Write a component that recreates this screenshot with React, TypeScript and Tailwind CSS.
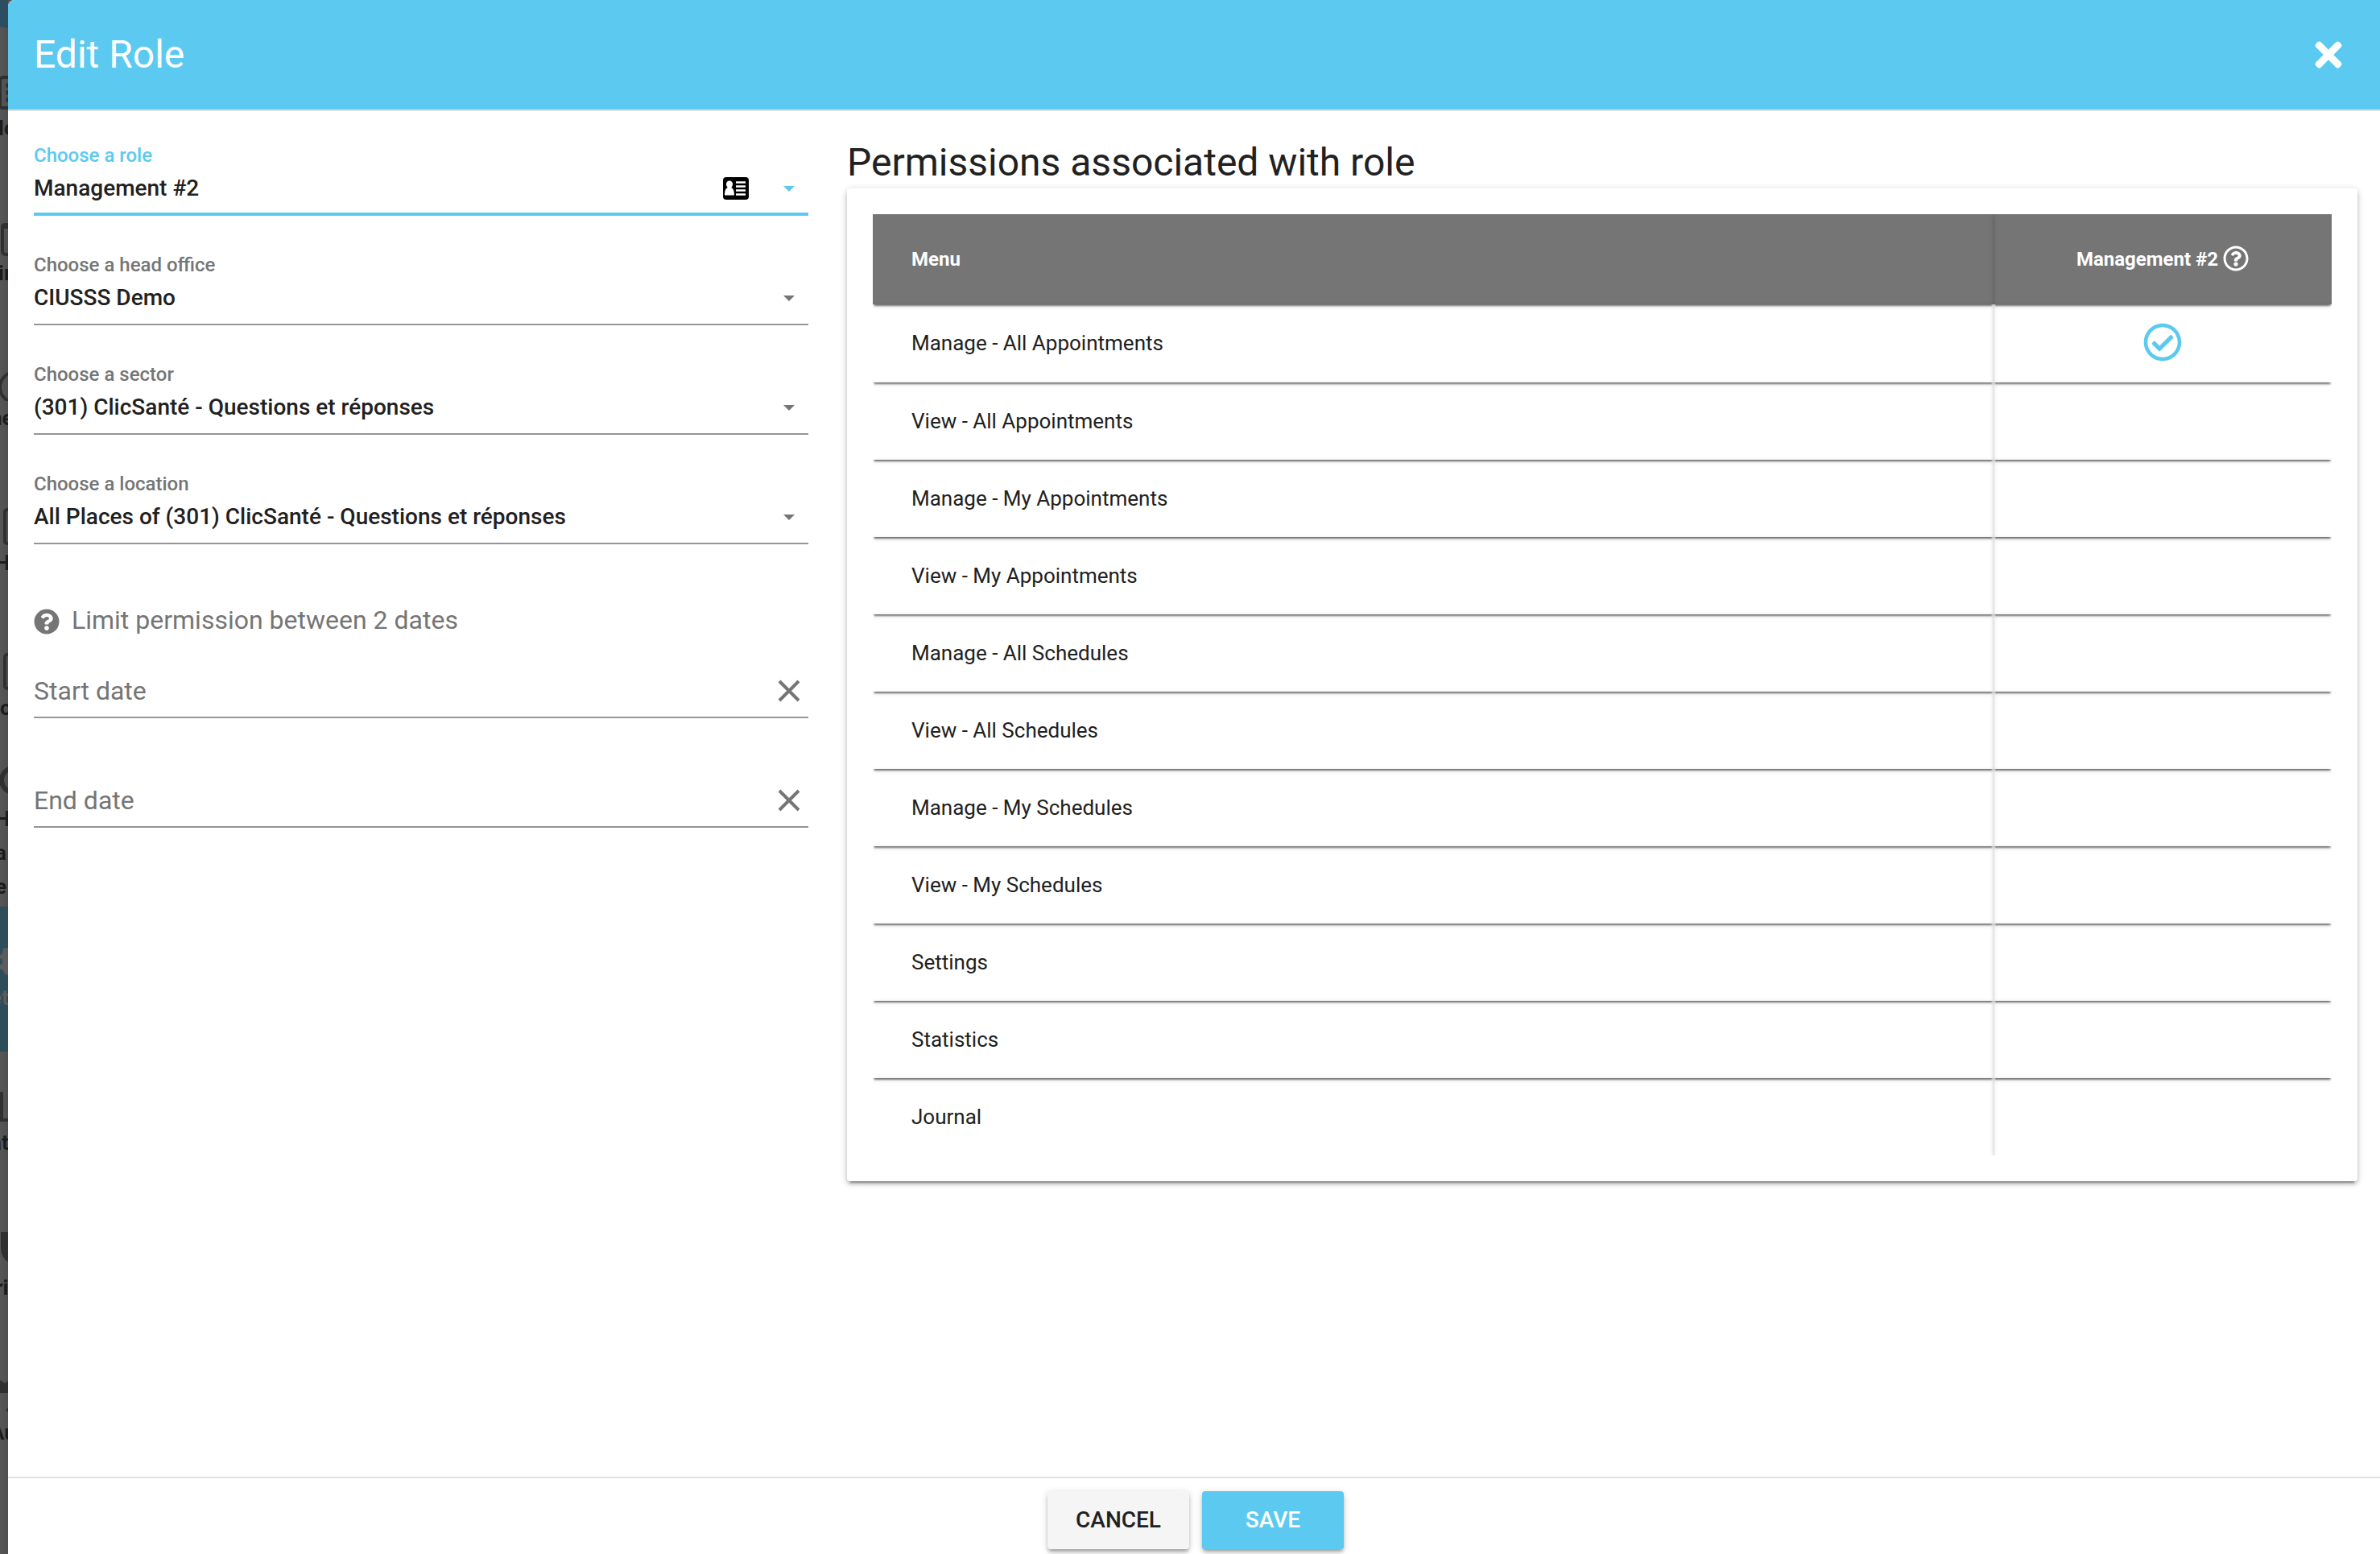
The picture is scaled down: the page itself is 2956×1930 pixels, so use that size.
import { useId, useState } from "react";
import type { ReactNode } from "react";
import { FaQuestionCircle, FaRegCheckCircle, FaRegQuestionCircle, FaTimes } from "react-icons/fa";

const permissions = [
    { label: "Manage - All Appointments", granted: true },
    { label: "View - All Appointments", granted: false },
    { label: "Manage - My Appointments", granted: false },
    { label: "View - My Appointments", granted: false },
    { label: "Manage - All Schedules", granted: false },
    { label: "View - All Schedules", granted: false },
    { label: "Manage - My Schedules", granted: false },
    { label: "View - My Schedules", granted: false },
    { label: "Settings", granted: false },
    { label: "Statistics", granted: false },
    { label: "Journal", granted: false },
];

const cellShadow = "shadow-[0_2px_6px_0_rgba(0,0,0,0.14),0_1px_2px_0_rgba(0,0,0,0.12),0_4px_2px_-2px_rgba(0,0,0,0.45)]";
const buttonShadow = "shadow-[0_2px_10px_0_rgba(0,0,0,0.16),0_4px_4px_-1px_rgba(0,0,0,0.3)]";

function NavItem({ icon, text, className = "" }: { icon: ReactNode; text: string; className?: string }) {
    return (
        <li className={`h-[180px] overflow-hidden pt-11 ${className}`}>
            <svg className="block h-12 w-2.5" viewBox="0 0 10 48" fill="none" stroke="#303030" strokeWidth="4" aria-hidden="true">
                {icon}
            </svg>
            <span className="block whitespace-nowrap">{text}</span>
        </li>
    );
}

// The part of the app's navigation that stays visible behind the dialog.
function Backdrop() {
    return (
        <aside className="w-2.5 shrink-0 overflow-hidden bg-gradient-to-r from-[#565656] to-[#4f4f4f] text-[26px] leading-[42px] font-bold text-[#1c1c1c]">
            <svg className="block h-[46px] w-2.5" viewBox="0 0 10 46" aria-hidden="true">
                <path d="M0 0h10v35L0 33z" fill="#2d4d60" />
            </svg>
            <ul>
                <NavItem
                    text="lo"
                    className="-indent-0.5"
                    icon={
                        <>
                            <path d="M12 6H4a4 4 0 0 0-4 4v31a3 3 0 0 0 3 3h9" />
                            <g fill="#303030" stroke="none">
                                <circle cx="10" cy="16" r="3" />
                                <circle cx="10" cy="25" r="3" />
                                <circle cx="10" cy="34" r="3" />
                            </g>
                        </>
                    }
                />
                <NavItem
                    text="in"
                    className="-indent-0.5"
                    icon={
                        <>
                            <path d="M12 9H6a3 3 0 0 0-3 3v30a4 4 0 0 0 4 4h5" />
                            <path d="M2 11h10" strokeWidth="6" />
                        </>
                    }
                />
                <NavItem text="ne" className="-indent-3" icon={<circle cx="19" cy="31" r="19" />} />
                <NavItem text="H" className="-indent-1.5" icon={<path d="M12 3H9a3 3 0 0 0-3 3v36a3 3 0 0 0 3 3h3" />} />
                <NavItem text="o" icon={<path d="M12 3H9a3 3 0 0 0-3 3v36a3 3 0 0 0 3 3h3" />} />
                <li className="h-[180px] overflow-hidden pt-0.5">
                    <svg className="block h-12 w-2.5" viewBox="0 0 10 48" fill="none" stroke="#303030" strokeWidth="6" aria-hidden="true">
                        <circle cx="17" cy="21" r="15" />
                    </svg>
                    <span className="block -indent-1.5">H</span>
                    <span className="block -indent-1.5">a</span>
                    <span className="block -indent-1.5">e</span>
                </li>
                <NavItem
                    text="et"
                    className="-indent-3 bg-[#2d4d59] text-[#5c5c5c]"
                    icon={<path d="M4 8l6-1v34l-4-1-2-5-4-2v-5l3-1v-5l-3-2v-4l3-2z" fill="#5c5c5c" stroke="none" />}
                />
                <NavItem text="at" className="-indent-3" icon={<path d="M2 6v35h10" />} />
                <NavItem text="ri" className="-indent-1.5" icon={<path d="M1-3h9v40C4 34 1 27 1 18z" fill="#303030" stroke="none" />} />
                <NavItem
                    text="Au"
                    className="-indent-3"
                    icon={<path d="M0 4l6 4 4-3v15H0zM10 38l-3 3 3 3z" fill="#303030" stroke="none" />}
                />
            </ul>
        </aside>
    );
}

function IdCardIcon() {
    return (
        <svg className="h-7 w-8" viewBox="0 0 32 28" aria-hidden="true">
            <rect width="32" height="28" rx="4" fill="#000" />
            <path d="M8 4.500c2.500 0 4 1.800 4 4.300 0 1.900-.9 3.300-1.800 4.200 2.300.8 3.800 3.600 3.800 9.500H2c0-5.900 1.500-8.700 3.800-9.500C4.900 12.100 4 10.700 4 8.800c0-2.500 1.500-4.300 4-4.300z" fill="#fff" />
            <path d="M16 6.500h12M16 11.500h12M16 16.500h12M16 21.500h12" stroke="#fff" strokeWidth="2.500" />
        </svg>
    );
}

function SelectField({ label, value, active = false, icon }: { label: string; value: string; active?: boolean; icon?: ReactNode }) {
    const id = useId();

    return (
        <div className={`relative h-[88px] font-medium ${active ? "border-b-4 border-[#5cc9f0] text-[#5cc9f0]" : "border-b-2 border-[#959595] text-[#757575]"}`}>
            <label htmlFor={id} className="block text-2xl leading-[26px]">
                {label}
            </label>
            <select id={id} defaultValue={value} className="block h-14 w-full appearance-none bg-transparent pr-28 text-[28px] text-[#212121] outline-none">
                <option>{value}</option>
            </select>
            <div className="pointer-events-none absolute right-[17px] top-[26px] flex h-14 items-center gap-[43px]">
                {icon}
                <svg className="h-[7px] w-3.5" viewBox="0 0 14 7" fill="currentColor" aria-hidden="true">
                    <path d="M0 0h14L7 7z" />
                </svg>
            </div>
        </div>
    );
}

function DateField({ label }: { label: string }) {
    const [value, setValue] = useState("");

    return (
        <div className="flex h-16 items-center border-b-2 border-[#959595] pr-2.5 pb-0.5 text-[#757575]">
            <input
                type="text"
                aria-label={label}
                placeholder={label}
                value={value}
                onChange={(e) => setValue(e.target.value)}
                className="h-full min-w-0 flex-1 bg-transparent text-[32px] outline-none placeholder:text-[#757575]"
            />
            <button type="button" aria-label={`Clear ${label}`} onClick={() => setValue("")} className="p-0.5">
                <svg className="size-6 overflow-visible" viewBox="0 0 24 24" stroke="currentColor" strokeWidth="4" aria-hidden="true">
                    <path d="M0 0l24 24M24 0L0 24" />
                </svg>
            </button>
        </div>
    );
}

function PermissionTable() {
    return (
        <div className="rounded bg-white p-8 shadow-[0_2px_10px_0_rgba(0,0,0,0.2),0_4px_4px_0_rgba(0,0,0,0.14),0_6px_2px_-4px_rgba(0,0,0,0.3)]">
            <div className="overflow-hidden">
                <table className="w-full table-fixed border-collapse text-[26px] text-[#212121]">
                    <thead className="bg-[#757575] text-2xl text-white">
                        <tr className="h-28">
                            <th scope="col" className={`pl-12 text-left font-bold ${cellShadow}`}>
                                Menu
                            </th>
                            <th scope="col" className={`w-[420px] font-bold ${cellShadow}`}>
                                <span className="flex items-center justify-center gap-1.5">
                                    Management #2
                                    <FaRegQuestionCircle className="mb-0.5 size-8" />
                                </span>
                            </th>
                        </tr>
                    </thead>
                    <tbody>
                        {permissions.map(({ label, granted }) => (
                            <tr key={label} className="h-24 first:h-[97px]">
                                <td className={`pl-12 ${cellShadow}`}>{label}</td>
                                <td className={`pb-1 ${cellShadow}`}>
                                    {granted && <FaRegCheckCircle className="mx-auto size-12 text-[#5cc9f0]" title="Granted" />}
                                </td>
                            </tr>
                        ))}
                    </tbody>
                </table>
            </div>
        </div>
    );
}

export default function App() {
    return (
        <div className="flex h-screen min-h-[1600px] overflow-hidden bg-[#505050] font-[Roboto,sans-serif] text-[#212121]">
            <Backdrop />
            <div role="dialog" aria-labelledby="dialog-title" className="flex min-w-0 flex-1 flex-col overflow-hidden rounded-tl-lg bg-white">
                <header className="flex h-[138px] shrink-0 items-center justify-between border-b-2 border-[#e0e0e0] bg-[#5cc9f0] pl-8 pr-6 text-white">
                    <h1 id="dialog-title" className="text-5xl">
                        Edit Role
                    </h1>
                    <button type="button" aria-label="Close" className="flex size-20 items-center justify-center">
                        <FaTimes className="h-12 w-auto" />
                    </button>
                </header>

                <main className="flex flex-1 pl-8 pr-7">
                    <form className="w-1/3 shrink-0 pt-[42px]">
                        <div className="flex flex-col gap-12">
                            <SelectField label="Choose a role" value="Management #2" active icon={<IdCardIcon />} />
                            <SelectField label="Choose a head office" value="CIUSSS Demo" />
                            <SelectField label="Choose a sector" value="(301) ClicSanté - Questions et réponses" />
                            <SelectField label="Choose a location" value="All Places of (301) ClicSanté - Questions et réponses" />
                        </div>
                        <div className="mt-[74px] flex items-center gap-[15px] text-[32px] leading-10 text-[#757575]">
                            <FaQuestionCircle className="mt-1 size-8" />
                            <span>Limit permission between 2 dates</span>
                        </div>
                        <div className="mt-[38px] flex flex-col gap-[72px]">
                            <DateField label="Start date" />
                            <DateField label="End date" />
                        </div>
                    </form>

                    <section className="min-w-0 flex-1 pl-12 pt-8">
                        <h2 className="text-5xl leading-[64px]">Permissions associated with role</h2>
                        <PermissionTable />
                    </section>
                </main>

                <footer className="flex h-24 shrink-0 justify-center gap-4 border-t-2 border-[#e0e0e0] pl-1 pt-4 text-[28px] font-medium">
                    <button type="button" className={`h-[72px] w-44 rounded bg-[#f5f5f5] uppercase ${buttonShadow}`}>
                        Cancel
                    </button>
                    <button type="button" className={`h-[72px] w-44 rounded bg-[#5cc9f0] uppercase text-white ${buttonShadow}`}>
                        Save
                    </button>
                </footer>
            </div>
        </div>
    );
}
